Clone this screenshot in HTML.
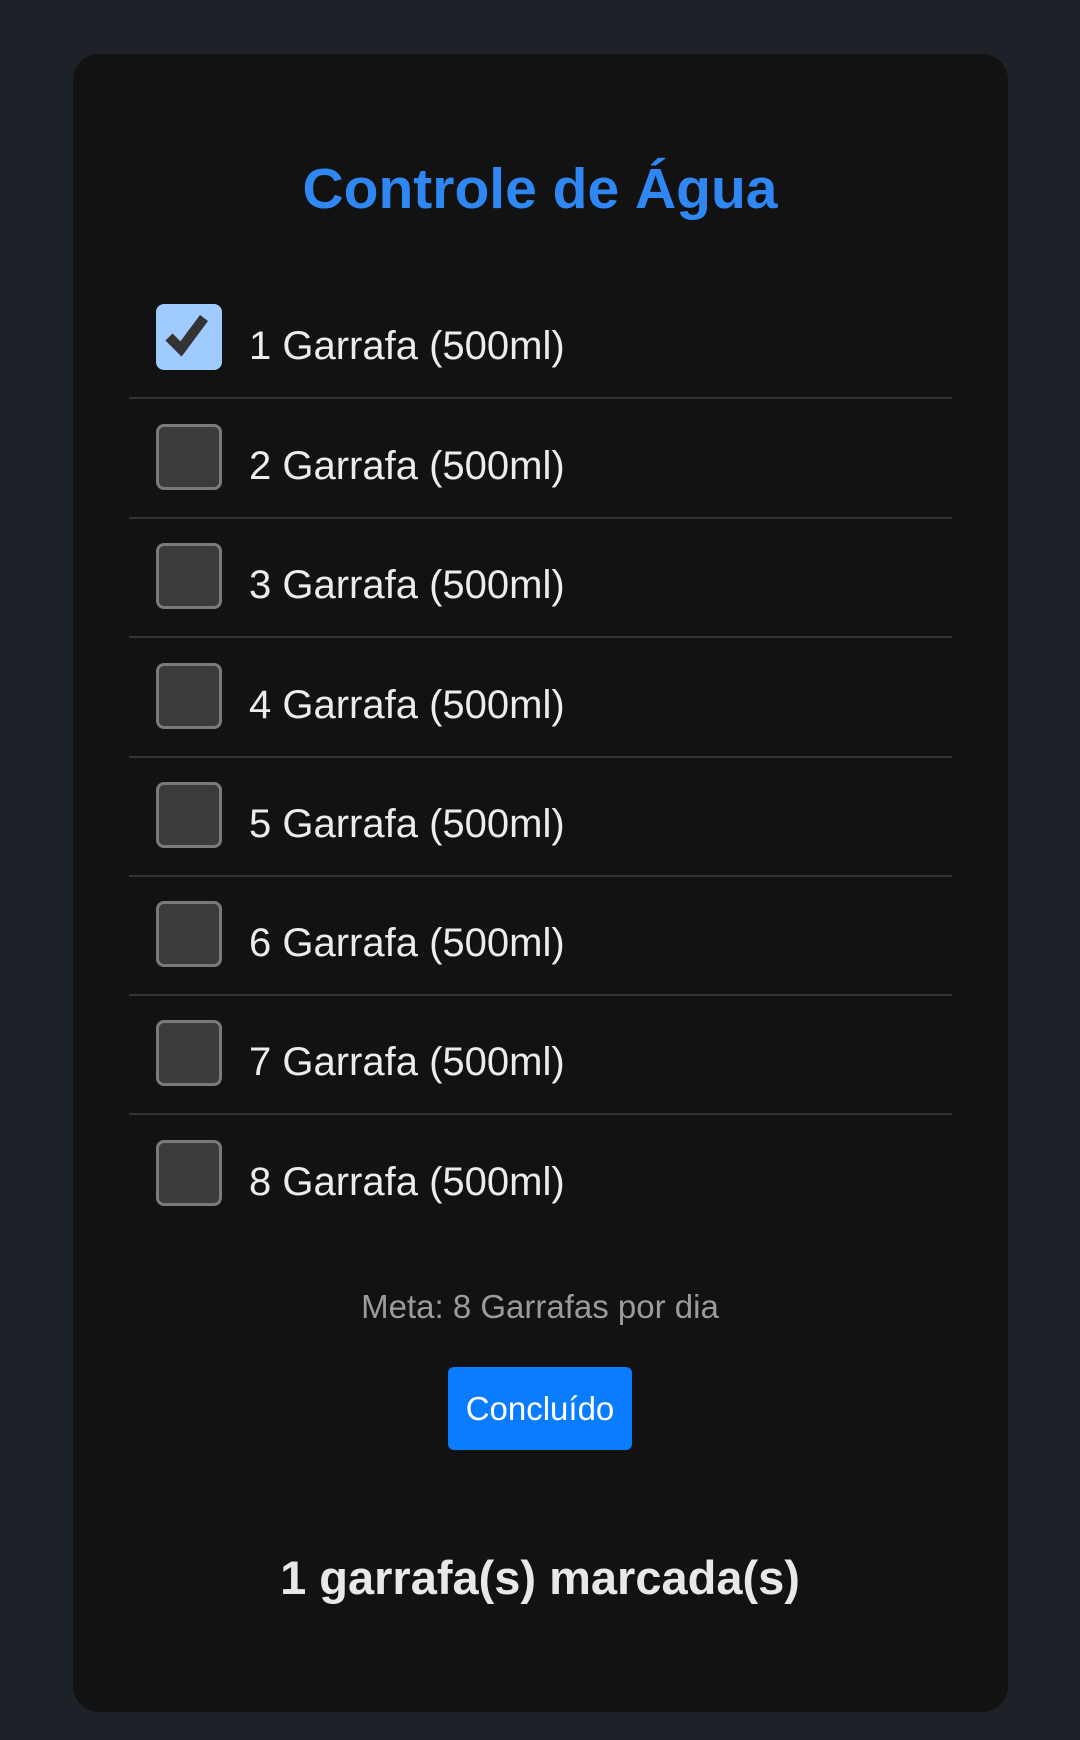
<!DOCTYPE html>
<html><head><meta charset="utf-8"><style>
body{margin:0;width:1080px;height:1740px;background:#1d2128;font-family:"Liberation Sans",sans-serif;position:relative;overflow:hidden}
.card{position:absolute;left:73px;top:54px;width:935px;height:1658px;background:#121212;border-radius:26px}
h1{position:absolute;left:0;right:0;top:149px;margin:0;text-align:center;color:#2f87f3;font-size:57px;font-weight:bold;line-height:80px}
.row{position:absolute;left:129px;width:823px;height:119px;border-bottom:2px solid #333}
.row.last{border-bottom:none}
.cb{position:absolute;left:27px;top:26px;width:66px;height:66px;box-sizing:border-box;border:3px solid #7a7a7a;background:#3b3b3b;border-radius:8px}
.cb.on{background:#a0cbff;border:none}
.lbl{position:absolute;left:120px;top:43px;color:#ececec;font-size:40px;line-height:50px}
.meta{position:absolute;left:0;right:0;top:1288px;text-align:center;color:#9b9b9b;font-size:33px}
.btn{position:absolute;left:448px;top:1367px;width:184px;height:83px;background:#0a7cff;border-radius:6px;color:#fff;font-size:33px;text-align:center;line-height:83px}
.res{position:absolute;left:0;right:0;top:1550px;text-align:center;color:#e8e8e8;font-size:47px;font-weight:bold}
</style></head><body>
<div class="card"></div>
<h1>Controle de Água</h1>
<div class="row" style="top:278px"><div class="cb on"><svg width="66" height="66" viewBox="0 0 66 66"><path d="M13 33 L25 45 L48 14" fill="none" stroke="#333" stroke-width="10"/></svg></div><div class="lbl">1 Garrafa (500ml)</div></div>
<div class="row" style="top:398px"><div class="cb"></div><div class="lbl">2 Garrafa (500ml)</div></div>
<div class="row" style="top:517px"><div class="cb"></div><div class="lbl">3 Garrafa (500ml)</div></div>
<div class="row" style="top:637px"><div class="cb"></div><div class="lbl">4 Garrafa (500ml)</div></div>
<div class="row" style="top:756px"><div class="cb"></div><div class="lbl">5 Garrafa (500ml)</div></div>
<div class="row" style="top:875px"><div class="cb"></div><div class="lbl">6 Garrafa (500ml)</div></div>
<div class="row" style="top:994px"><div class="cb"></div><div class="lbl">7 Garrafa (500ml)</div></div>
<div class="row last" style="top:1114px"><div class="cb"></div><div class="lbl">8 Garrafa (500ml)</div></div>
<div class="meta">Meta: 8 Garrafas por dia</div>
<div class="btn">Concluído</div>
<div class="res">1 garrafa(s) marcada(s)</div>
</body></html>
